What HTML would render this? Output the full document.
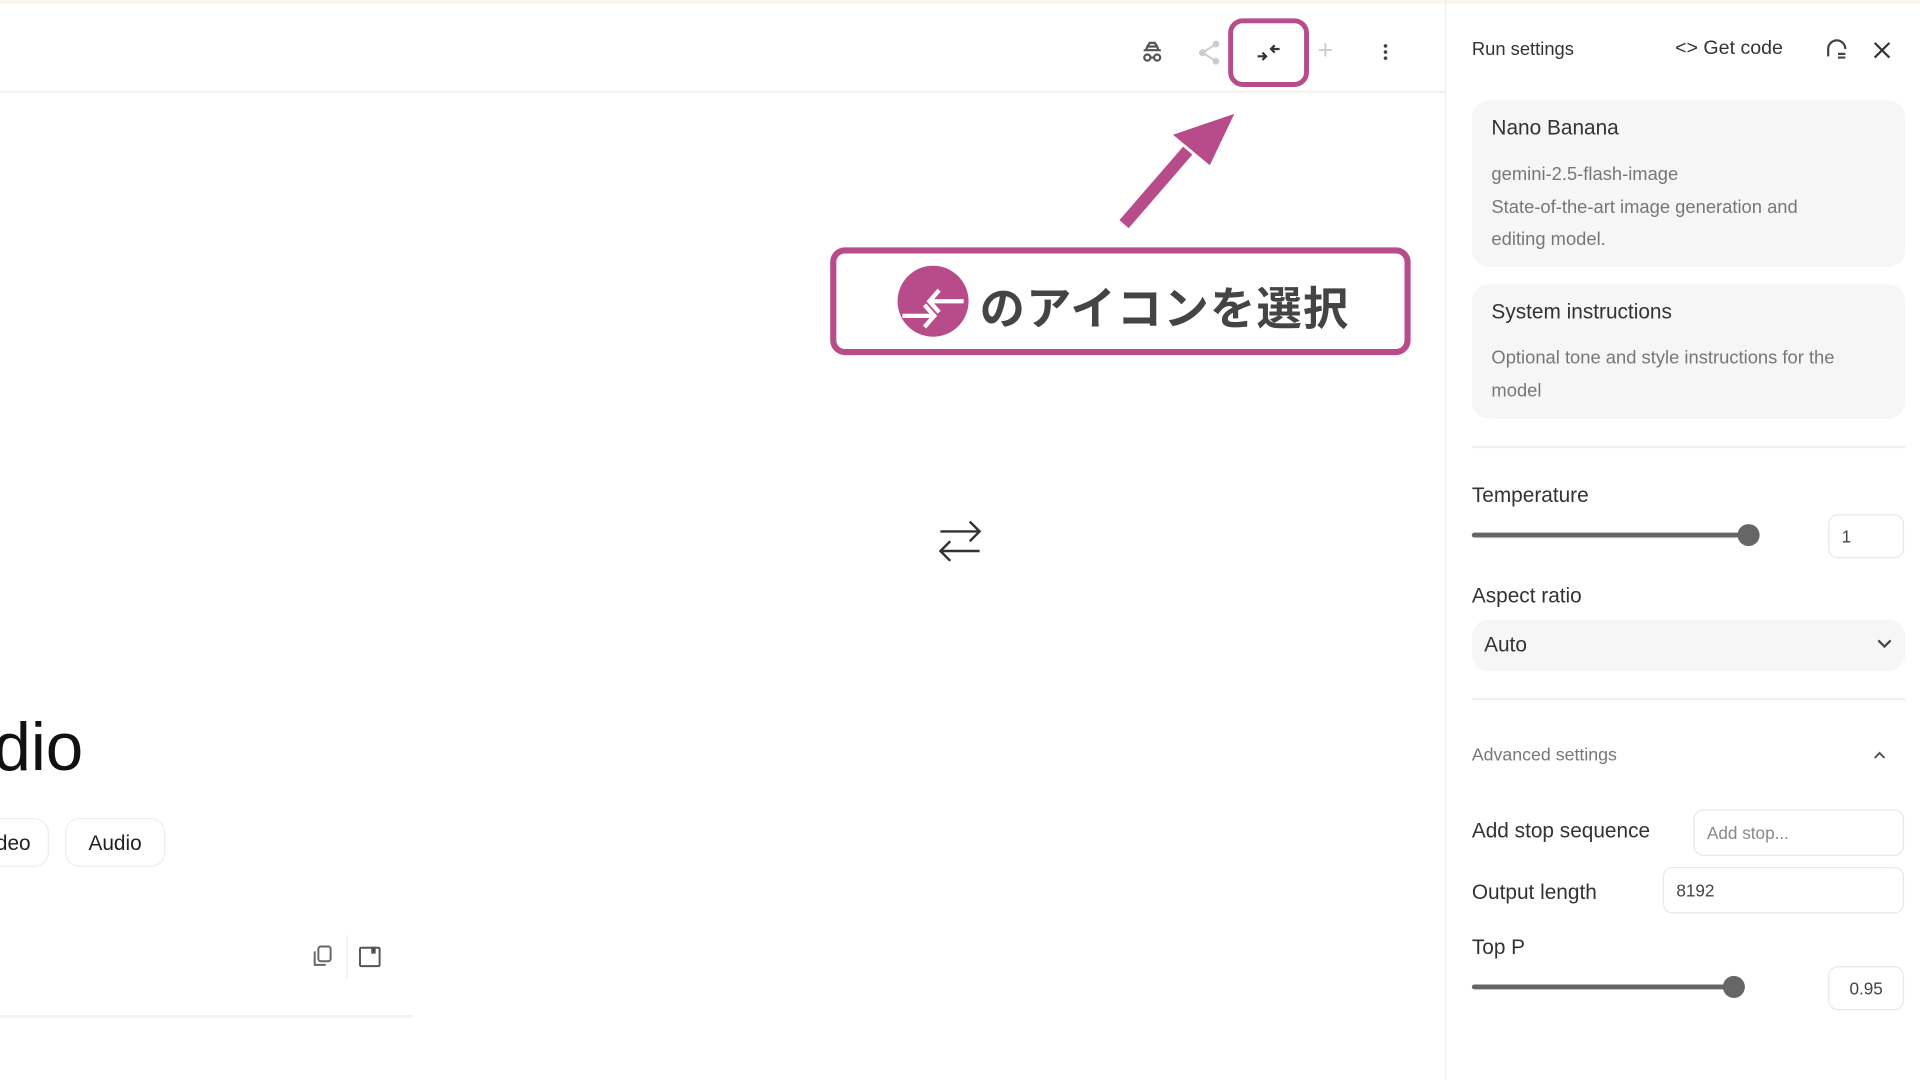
<!DOCTYPE html>
<html><head><meta charset="utf-8"><style>
html,body{margin:0;padding:0;width:1920px;height:1080px;overflow:hidden;background:#fff;}
#w{position:absolute;left:0;top:0;width:1568px;height:882px;transform:scale(1.22449);transform-origin:0 0;font-family:"Liberation Sans","Noto Sans CJK JP",sans-serif;color:#222;}
.a{position:absolute;}
.card{position:absolute;background:#f6f6f6;border-radius:14px;}
.lbl{position:absolute;font-size:17px;color:#333;}
.box{position:absolute;border:1px solid #e8e8e8;border-radius:8px;background:#fff;font-size:14px;color:#444;box-sizing:border-box;padding-left:10px;}
</style></head><body><div id="w">
<div class="a" style="left:0;top:0;width:1568px;height:3px;background:#fbf5f0"></div>
<div class="a" style="left:0;top:74px;width:1180px;height:2px;background:#f4f2f0"></div>
<div class="a" style="left:1180px;top:0;width:1px;height:882px;background:#eee"></div>
<!-- top icons -->
<svg class="a" style="left:930px;top:32px" width="22" height="22" viewBox="0 0 22 22" fill="none" stroke="#555" stroke-width="1.8"><path d="M7 6 L9 3 L13 3 L15 6 M4 9 H18 M6 9 L7 6 H15 L16 9"/><circle cx="7" cy="15" r="2.5"/><circle cx="15" cy="15" r="2.5"/><path d="M9.5 15 H12.5"/></svg>
<svg class="a" style="left:977px;top:32px" width="22" height="22" viewBox="0 0 22 22" fill="none" stroke="#ccc" stroke-width="1.6"><path d="M16 4 L5 11 L16 18"/><circle cx="16" cy="4" r="2" fill="#ccc"/><circle cx="5" cy="11" r="2" fill="#ccc"/><circle cx="16" cy="18" r="2" fill="#ccc"/></svg>
<svg class="a" style="left:1025px;top:33px" width="22" height="20" viewBox="0 0 22 20" fill="none" stroke="#333" stroke-width="1.8"><path d="M2 13 H9 M6 10 L9 13 L6 16 M20 7 H13 M16 4 L13 7 L16 10"/></svg>
<div class="a" style="left:1003px;top:15px;width:66px;height:56px;border:4px solid #b84c8a;border-radius:12px;box-sizing:border-box"></div>
<div class="a" style="left:1076px;top:28px;font-size:22px;color:#ccc">+</div>
<div class="a" style="left:1130px;top:36px;width:3px;height:3px;background:#444;border-radius:50%;box-shadow:0 5px 0 #444,0 10px 0 #444"></div>
<!-- arrow -->
<svg class="a" style="left:900px;top:85px" width="120" height="110" viewBox="0 0 120 110"><path d="M18 98 L70 38" stroke="#b84c8a" stroke-width="10"/><path d="M108 8 L58 25 L88 50 Z" fill="#b84c8a"/></svg>
<!-- callout -->
<div class="a" style="left:678px;top:202px;width:474px;height:88px;border:5px solid #b84c8a;border-radius:12px;box-sizing:border-box;background:#fff"></div>
<div class="a" style="left:733px;top:217px;width:58px;height:58px;border-radius:50%;background:#b84c8a"></div>
<svg class="a" style="left:733px;top:217px" width="58" height="58" viewBox="0 0 58 58" fill="none" stroke="#fff" stroke-width="3.5"><path d="M28 29 H54 M34 20 L26 29 L34 38"/><path d="M4 41 H30 M22 32 L30 41 L22 50"/></svg>
<div class="a" style="left:800px;top:222px;font-size:37px;font-weight:bold;color:#444;letter-spacing:1px">のアイコンを選択</div>
<!-- center swap -->
<svg class="a" style="left:764px;top:420px" width="40" height="42" viewBox="0 0 40 42" fill="none" stroke="#333" stroke-width="2"><path d="M4 14 H36 M28 6 L36 14 L28 22"/><path d="M36 30 H4 M12 22 L4 30 L12 38"/></svg>
<!-- left content -->
<div class="a" style="left:-36px;top:578px;font-size:55px;color:#111">udio</div>
<div class="a" style="left:-40px;top:668px;width:80px;height:40px;border:1px solid #eee;border-radius:12px;font-size:17px;line-height:40px;text-align:right;padding-right:14px;box-sizing:border-box">Video</div>
<div class="a" style="left:53px;top:668px;width:82px;height:40px;border:1px solid #eee;border-radius:12px;font-size:17px;line-height:40px;text-align:center;box-sizing:border-box">Audio</div>
<svg class="a" style="left:253px;top:771px" width="20" height="20" viewBox="0 0 20 20" fill="none" stroke="#666" stroke-width="1.6"><rect x="7" y="2" width="10" height="12" rx="2"/><path d="M4 6 V17 H13"/></svg>
<div class="a" style="left:283px;top:764px;width:1px;height:36px;background:#eee"></div>
<svg class="a" style="left:292px;top:771px" width="20" height="20" viewBox="0 0 20 20" fill="none" stroke="#555" stroke-width="1.6"><rect x="2" y="3" width="16" height="15" rx="1"/><rect x="12" y="3" width="2" height="4" fill="#222"/></svg>
<div class="a" style="left:0;top:829px;width:337px;height:2px;background:#f2f2f2"></div>
<!-- right panel -->
<div class="lbl" style="left:1202px;top:32px;font-size:15px">Run settings</div>
<div class="lbl" style="left:1368px;top:31px;font-size:16px">&lt;&gt; Get code</div>
<svg class="a" style="left:1490px;top:31px" width="20" height="20" viewBox="0 0 20 20" fill="none" stroke="#444" stroke-width="1.8"><path d="M3 15 V9 A7 7 0 0 1 17 9"/><path d="M11 13 H17 M11 16 H17"/></svg>
<svg class="a" style="left:1529px;top:33px" width="16" height="16" viewBox="0 0 16 16" stroke="#333" stroke-width="1.8"><path d="M2 2 L14 14 M14 2 L2 14"/></svg>
<div class="card" style="left:1202px;top:82px;width:354px;height:136px"></div>
<div class="lbl" style="left:1218px;top:95px">Nano Banana</div>
<div class="lbl" style="left:1218px;top:130px;font-size:15px;color:#777;line-height:26.5px">gemini-2.5-flash-image<br>State-of-the-art image generation and<br>editing model.</div>
<div class="card" style="left:1202px;top:232px;width:354px;height:110px"></div>
<div class="lbl" style="left:1218px;top:245px">System instructions</div>
<div class="lbl" style="left:1218px;top:280px;font-size:15px;color:#777;line-height:26.5px">Optional tone and style instructions for the<br>model</div>
<div class="a" style="left:1202px;top:364px;width:354px;height:2px;background:#f0f0f0"></div>
<div class="lbl" style="left:1202px;top:395px">Temperature</div>
<div class="a" style="left:1202px;top:435px;width:226px;height:4px;background:#666;border-radius:2px"></div>
<div class="a" style="left:1419px;top:428px;width:18px;height:18px;background:#666;border-radius:50%"></div>
<div class="box" style="left:1493px;top:420px;width:62px;height:36px;line-height:34px">1</div>
<div class="lbl" style="left:1202px;top:477px">Aspect ratio</div>
<div class="a" style="left:1202px;top:506px;width:354px;height:42px;background:#f6f6f6;border-radius:14px"></div>
<div class="lbl" style="left:1212px;top:517px">Auto</div>
<svg class="a" style="left:1532px;top:521px" width="14" height="10" viewBox="0 0 14 10" fill="none" stroke="#444" stroke-width="1.8"><path d="M2 2 L7 7 L12 2"/></svg>
<div class="a" style="left:1202px;top:570px;width:354px;height:2px;background:#f0f0f0"></div>
<div class="lbl" style="left:1202px;top:609px;font-size:14.5px;color:#777">Advanced settings</div>
<svg class="a" style="left:1529px;top:613px" width="12" height="8" viewBox="0 0 12 8" fill="none" stroke="#555" stroke-width="1.6"><path d="M2 6 L6 2 L10 6"/></svg>
<div class="lbl" style="left:1202px;top:669px">Add stop sequence</div>
<div class="box" style="left:1383px;top:661px;width:172px;height:38px;line-height:36px;color:#888">Add stop...</div>
<div class="lbl" style="left:1202px;top:719px">Output length</div>
<div class="box" style="left:1358px;top:708px;width:197px;height:38px;line-height:36px">8192</div>
<div class="lbl" style="left:1202px;top:764px">Top P</div>
<div class="a" style="left:1202px;top:804px;width:214px;height:4px;background:#666;border-radius:2px"></div>
<div class="a" style="left:1407px;top:797px;width:18px;height:18px;background:#666;border-radius:50%"></div>
<div class="box" style="left:1493px;top:789px;width:62px;height:36px;line-height:34px;text-align:center;padding:0">0.95</div>
</div></body></html>
